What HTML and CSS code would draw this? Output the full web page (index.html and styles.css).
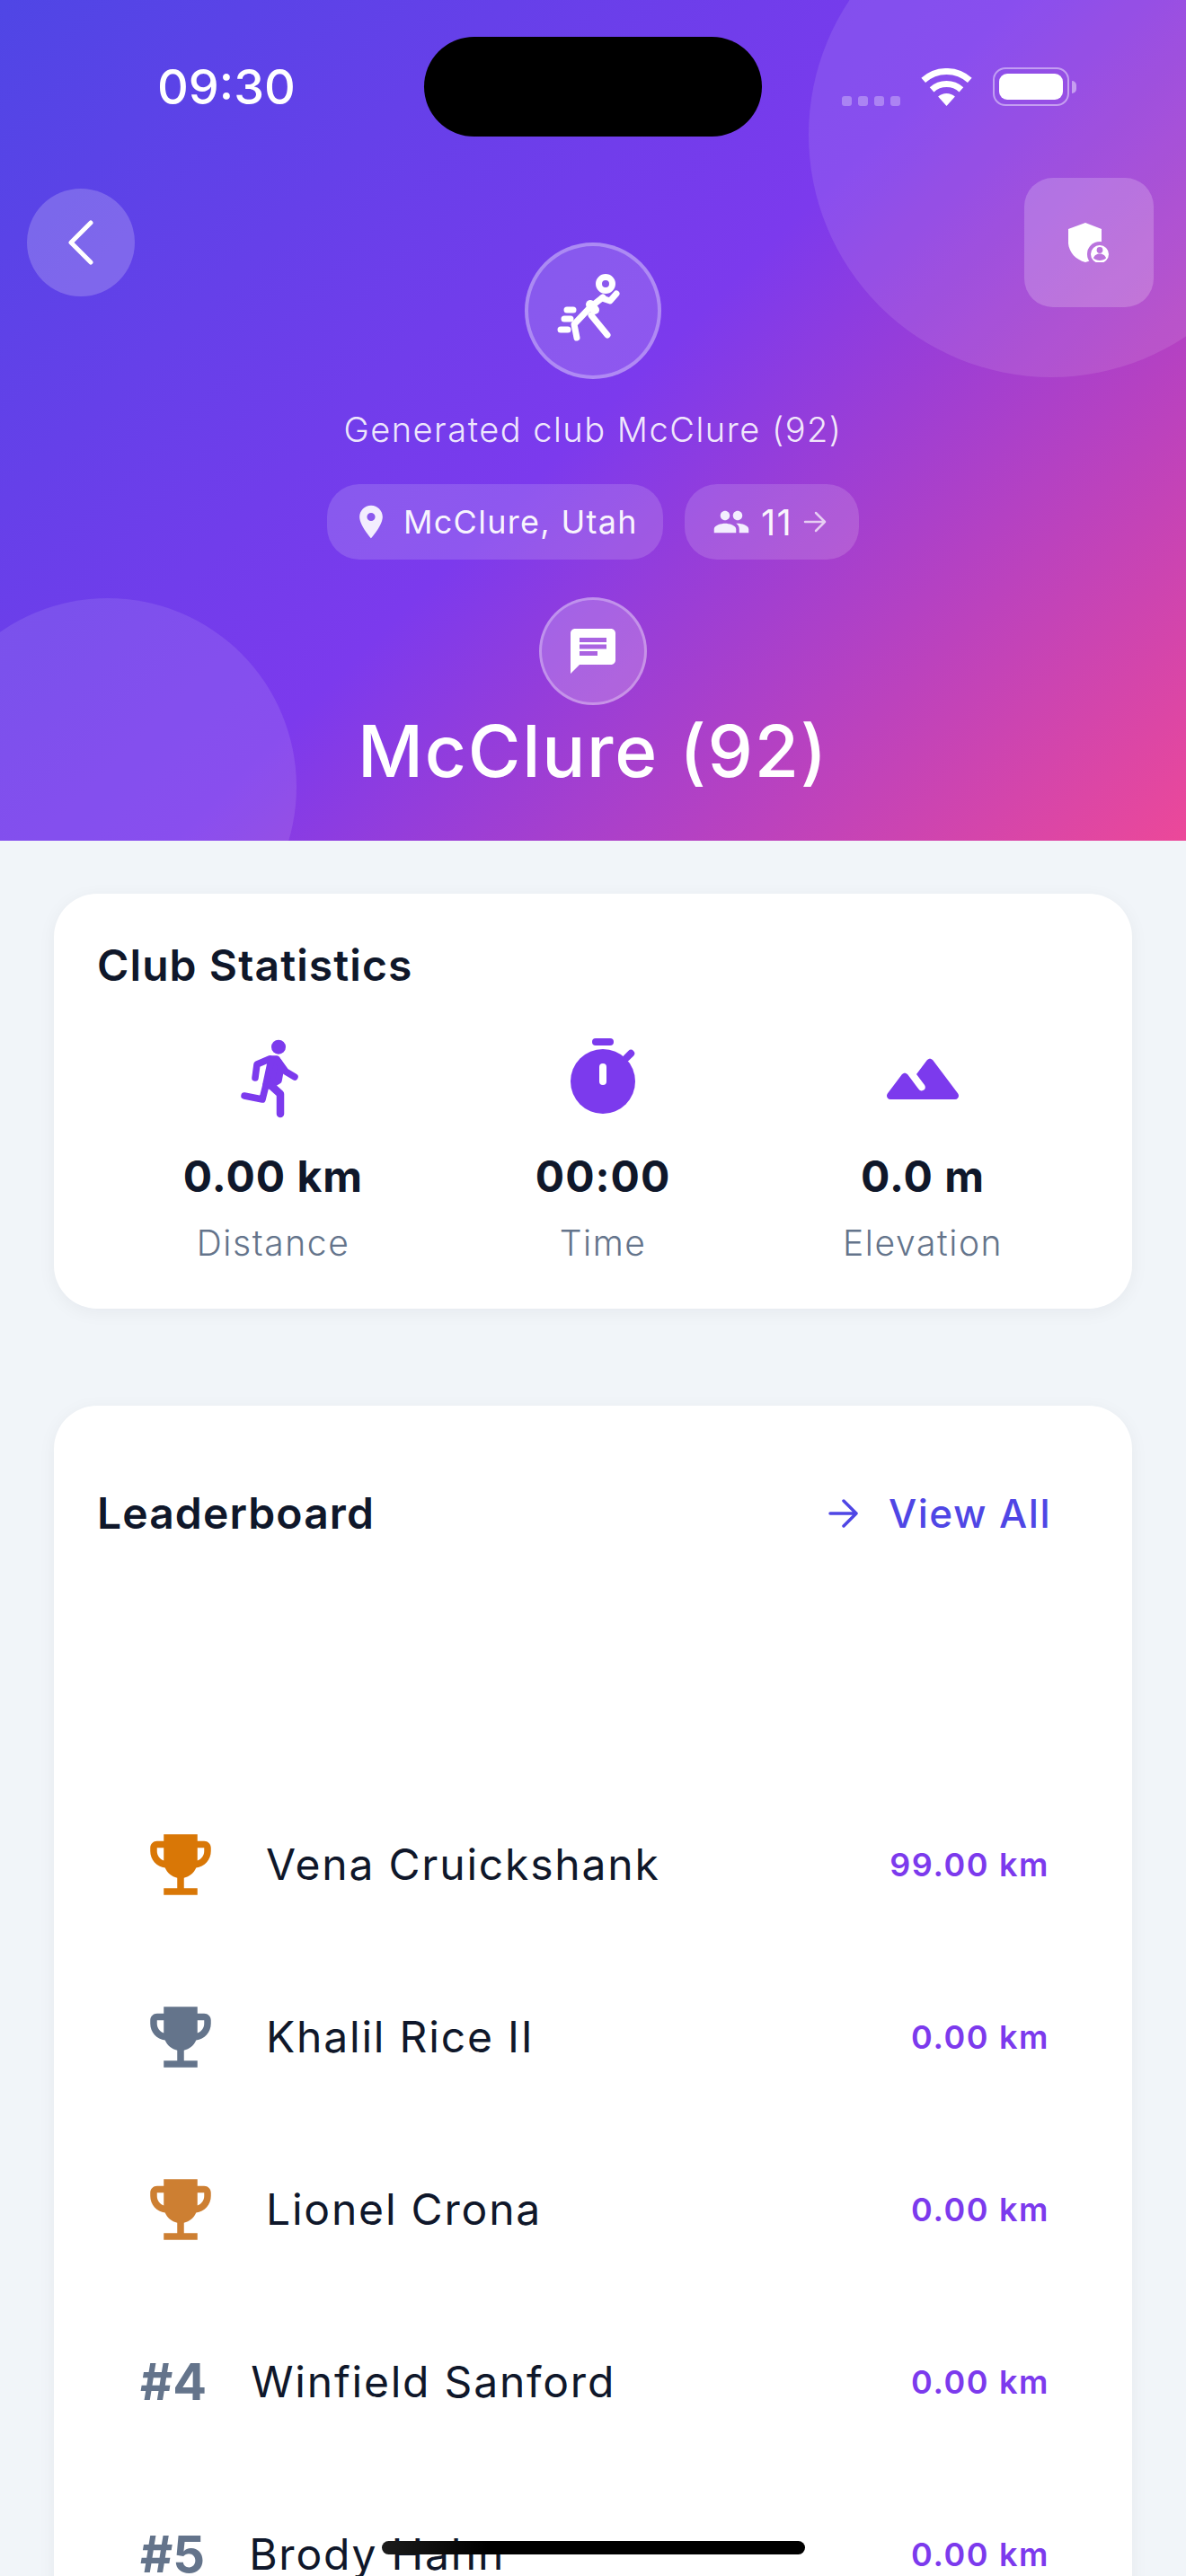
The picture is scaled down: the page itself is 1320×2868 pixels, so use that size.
FILE: index.html
```html
<!DOCTYPE html>
<html lang="en">
<head>
    <meta charset="utf-8">
    <title>McClure (92)</title>
    <link rel="stylesheet" href="styles.css">
</head>
<body>
    <svg class="defs" width="0" height="0">
        <symbol id="trophy" viewBox="0 0 24 24">
            <path d="M19 5h-2V3H7v2H5c-1.1 0-2 .9-2 2v1c0 2.55 1.92 4.63 4.39 4.94.63 1.5 1.98 2.63 3.61 2.96V19H7v2h10v-2h-4v-3.1c1.63-.33 2.98-1.46 3.61-2.96C19.08 12.63 21 10.55 21 8V7c0-1.1-.9-2-2-2zM5 8V7h2v3.82C5.84 10.4 5 9.3 5 8zm14 0c0 1.3-.84 2.4-2 2.82V7h2v1z"/>
        </symbol>
    </svg>

    <header class="hero">
        <div class="blob blob-top"></div>
        <div class="blob blob-bottom"></div>

        <div class="status-bar">
            <span class="time">09:30</span>
            <div class="island"></div>
            <div class="status-icons">
                <div class="signal"><i></i><i></i><i></i><i></i></div>
                <svg class="wifi" width="57" height="42" viewBox="0 0 57 42" fill="none" stroke="#fff" stroke-width="7">
                    <path d="M2.7 13.4A38.5 38.5 0 0 1 54.3 13.4"/>
                    <path d="M12.1 23.8A24.5 24.5 0 0 1 44.9 23.8"/>
                    <path d="M28.5 42L19.1 31.6A14 14 0 0 1 37.9 31.6Z" fill="#fff" stroke="none"/>
                </svg>
                <div class="battery"><div class="battery-fill"></div></div>
                <div class="battery-nub"></div>
            </div>
        </div>

        <div class="hero-top">
            <button class="back-btn">
                <svg width="32" height="52" viewBox="0 0 32 52" fill="none" stroke="#fff" stroke-width="5" stroke-linecap="round" stroke-linejoin="round">
                    <path d="M27 4L5 26l22 22"/>
                </svg>
            </button>
            <div class="club-icon">
                <svg width="120" height="120" viewBox="0 -3 120 120" fill="none" stroke="#fff" stroke-width="7" stroke-linecap="round" stroke-linejoin="round">
                    <circle cx="74" cy="27" r="7.5"/>
                    <path d="M71 42L57 53 39 72l3 15"/>
                    <path d="M70 43l9 3 7-8"/>
                    <path d="M58 62l18 22"/>
                    <path d="M57 50l5 6" stroke-width="10"/>
                    <path d="M31 56h7M28 66h7M24 78h8"/>
                </svg>
            </div>
            <button class="shield-btn">
                <svg width="46" height="44" viewBox="0 0 46 44">
                    <mask id="shieldCut">
                        <rect width="46" height="44" fill="#fff"/>
                        <circle cx="35" cy="35" r="14" fill="#000"/>
                    </mask>
                    <mask id="personCut">
                        <rect width="46" height="44" fill="#fff"/>
                        <circle cx="35" cy="30.5" r="3.4" fill="#000"/>
                        <path d="M28 39.5c1-3.6 4-5 7-5s6 1.4 7 5c-1.8 1.6-4.2 2.4-7 2.4s-5.2-.8-7-2.4z" fill="#000"/>
                    </mask>
                    <path d="M19 0l18 7v16c0 10-7 18-18 21C8 41 1 33 0 23V7z" fill="#fff" mask="url(#shieldCut)"/>
                    <circle cx="35" cy="35" r="10" fill="#fff" mask="url(#personCut)"/>
                </svg>
            </button>
        </div>

        <p class="club-desc">Generated club McClure (92)</p>

        <div class="chips">
            <div class="chip chip-location">
                <svg width="44" height="44" viewBox="0 0 24 24" fill="#f3eefe">
                    <path d="M12 2C8.13 2 5 5.13 5 9c0 5.25 7 13 7 13s7-7.75 7-13c0-3.87-3.13-7-7-7zm0 9.5a2.5 2.5 0 0 1 0-5 2.5 2.5 0 0 1 0 5z"/>
                </svg>
                <span>McClure, Utah</span>
            </div>
            <div class="chip chip-members">
                <svg width="42" height="42" viewBox="0 0 24 24" fill="#f3eefe">
                    <path d="M16 11c1.66 0 2.99-1.34 2.99-3S17.66 5 16 5c-1.66 0-3 1.34-3 3s1.34 3 3 3zm-8 0c1.66 0 2.99-1.34 2.99-3S9.66 5 8 5C6.34 5 5 6.34 5 8s1.34 3 3 3zm0 2c-2.33 0-7 1.17-7 3.5V19h14v-2.5c0-2.33-4.67-3.5-7-3.5zm8 0c-.29 0-.62.02-.97.05 1.16.84 1.97 1.97 1.97 3.45V19h6v-2.5c0-2.33-4.67-3.5-7-3.5z"/>
                </svg>
                <span>11</span>
                <svg class="chip-arrow" width="26" height="26" viewBox="0 0 26 26" fill="none" stroke="#fff" stroke-opacity=".7" stroke-width="2.5" stroke-linecap="round" stroke-linejoin="round">
                    <path d="M2 13h22M14 3l10 10-10 10"/>
                </svg>
            </div>
        </div>

        <div class="chat-icon">
            <svg width="60" height="60" viewBox="0 0 24 24" fill="#fff">
                <path fill-rule="evenodd" d="M20 2H4c-1.1 0-1.99.9-1.99 2L2 22l4-4h14c1.1 0 2-.9 2-2V4c0-1.1-.9-2-2-2zM6 9h12v2H6V9zm8 5H6v-2h8v2zm4-6H6V6h12v2z"/>
            </svg>
        </div>

        <h1 class="club-name">McClure (92)</h1>
    </header>

    <main class="content">
        <section class="card stats-card">
            <h2 class="card-title">Club Statistics</h2>
            <div class="stats-row">
                <div class="stat">
                    <svg width="96" height="96" viewBox="6 12 96 96" fill="none" stroke="#7c3aed" stroke-width="7.5" stroke-linecap="round" stroke-linejoin="round">
                        <circle cx="60" cy="25.7" r="8" fill="#7c3aed" stroke="none"/>
                        <path d="M50 39l-14 6-2 15"/>
                        <path d="M60 42l8 11 10 6"/>
                        <path d="M52 39h6l5 8-3 16-10 6-4-2z" fill="#7c3aed"/>
                        <path d="M46 68l-4 16-20-4"/>
                        <path d="M51 68l11 10v22" stroke-width="8.5"/>
                    </svg>
                    <div class="stat-value">0.00 km</div>
                    <div class="stat-label">Distance</div>
                </div>
                <div class="stat">
                    <svg width="96" height="96" viewBox="0 0 24 24">
                        <rect x="9" y="1" width="6" height="2" rx="1" fill="#7c3aed"/>
                        <circle cx="12" cy="13" r="9" fill="#7c3aed"/>
                        <path d="M18.5 6.5l1.3-1.3" stroke="#7c3aed" stroke-width="2" stroke-linecap="round"/>
                        <path d="M12 9v4" stroke="#fff" stroke-width="2" stroke-linecap="round"/>
                    </svg>
                    <div class="stat-value">00:00</div>
                    <div class="stat-label">Time</div>
                </div>
                <div class="stat">
                    <svg width="96" height="96" viewBox="0 0 24 24" fill="#7c3aed">
                        <path d="M13.2 7.07L10.25 11l2.25 3c.33.44.24 1.07-.2 1.4-.44.33-1.07.24-1.4-.2-1.05-1.4-2.31-3.07-3.1-4.14-.4-.53-1.2-.53-1.6 0l-4 5.33c-.49.67-.02 1.61.8 1.61h18c.82 0 1.29-.94.8-1.6l-7-9.33c-.4-.54-1.2-.54-1.6 0z"/>
                    </svg>
                    <div class="stat-value">0.0 m</div>
                    <div class="stat-label">Elevation</div>
                </div>
            </div>
        </section>

        <section class="card board-card">
            <div class="board-head">
                <h2 class="card-title">Leaderboard</h2>
                <a class="view-all">
                    <svg width="34" height="32" viewBox="0 0 34 32" fill="none" stroke="#4f46e5" stroke-width="3.5" stroke-linecap="round" stroke-linejoin="round">
                        <path d="M2 16h29M17 2l14 14-14 14"/>
                    </svg>
                    <span>View All</span>
                </a>
            </div>

            <ul class="board-list">
                <li class="board-row">
                    <svg class="trophy gold"><use href="#trophy"/></svg>
                    <span class="name">Vena Cruickshank</span>
                    <span class="dist">99.00 km</span>
                </li>
                <li class="board-row">
                    <svg class="trophy silver"><use href="#trophy"/></svg>
                    <span class="name">Khalil Rice II</span>
                    <span class="dist">0.00 km</span>
                </li>
                <li class="board-row">
                    <svg class="trophy bronze"><use href="#trophy"/></svg>
                    <span class="name">Lionel Crona</span>
                    <span class="dist">0.00 km</span>
                </li>
                <li class="board-row">
                    <span class="rank">#4</span>
                    <span class="name">Winfield Sanford</span>
                    <span class="dist">0.00 km</span>
                </li>
                <li class="board-row">
                    <span class="rank">#5</span>
                    <span class="name">Brody Hahn</span>
                    <span class="dist">0.00 km</span>
                </li>
            </ul>
        </section>
    </main>

    <div class="home-bar"></div>
</body>
</html>
```

FILE: styles.css
```css
* {
    box-sizing: border-box;
}
html, body {
    margin: 0;
    height: 2868px;
    overflow: hidden;
}
body {
    position: relative;
    font-family: 'Inter', 'Liberation Sans', sans-serif;
    background-color: #f1f5f9;
    color: #0f172a;
}
.defs {
    position: absolute;
}

/* header */
.hero {
    position: relative;
    height: 936px;
    overflow: hidden;
    display: flex;
    flex-direction: column;
    align-items: center;
    color: #fff;
    background: linear-gradient(135deg, #4f46e5 0%, #7c3aed 50%, #ec4899 100%);
}
.blob {
    position: absolute;
    border-radius: 50%;
    background: rgba(255, 255, 255, 0.1);
}
.blob-top {
    width: 540px;
    height: 540px;
    top: -120px;
    right: -120px;
}
.blob-bottom {
    width: 420px;
    height: 420px;
    top: 666px;
    left: -90px;
}
.status-bar {
    position: relative;
    width: 100%;
    height: 198px;
    padding-top: 41px;
    display: flex;
    justify-content: center;
}
.time {
    position: absolute;
    left: 175px;
    top: 65px;
    font-size: 54px;
    line-height: 64px;
    font-weight: 500;
}
.island {
    width: 376px;
    height: 111px;
    border-radius: 56px;
    background: #000;
}
.status-icons {
    position: absolute;
    left: 937px;
    top: 75px;
    display: flex;
    align-items: flex-end;
}
.signal {
    display: flex;
    gap: 7px;
    margin-right: 23px;
}
.signal i {
    width: 11px;
    height: 11px;
    border-radius: 3px;
    background: rgba(255, 255, 255, 0.3);
}
.wifi {
    display: block;
    margin-right: 23px;
}
.battery {
    width: 85px;
    height: 43px;
    padding: 5px;
    border: 2px solid rgba(255, 255, 255, 0.45);
    border-radius: 14px;
}
.battery-fill {
    height: 100%;
    border-radius: 9px;
    background: #fff;
}
.battery-nub {
    width: 5px;
    height: 14px;
    margin: 0 0 14px 3px;
    border-radius: 0 6px 6px 0;
    background: rgba(255, 255, 255, 0.45);
}
.hero-top {
    position: relative;
    width: 100%;
    padding: 0 36px;
    display: grid;
    grid-template-columns: 1fr auto 1fr;
    align-items: start;
}
button {
    border: 0;
    padding: 0;
    display: flex;
    align-items: center;
    justify-content: center;
}
.back-btn {
    width: 120px;
    height: 120px;
    margin: 12px 0 0 -6px;
    border-radius: 50%;
    background: rgba(255, 255, 255, 0.2);
}
.shield-btn {
    width: 144px;
    height: 144px;
    justify-self: end;
    border-radius: 32px;
    background: rgba(255, 255, 255, 0.2);
}
.club-icon {
    width: 152px;
    height: 152px;
    margin-top: 72px;
    border: 4px solid rgba(255, 255, 255, 0.3);
    border-radius: 50%;
    background: rgba(255, 255, 255, 0.15);
    display: flex;
    align-items: center;
    justify-content: center;
}
.club-desc {
    position: relative;
    margin: 34px 0 0;
    font-size: 38px;
    line-height: 44px;
    font-weight: 300;
    letter-spacing: 1.5px;
    color: rgba(255, 255, 255, 0.9);
}
.chips {
    position: relative;
    margin-top: 39px;
    display: flex;
    gap: 24px;
}
.chip {
    height: 84px;
    border-radius: 36px;
    background: rgba(255, 255, 255, 0.15);
    display: flex;
    align-items: center;
    font-size: 36px;
    letter-spacing: 1.3px;
    color: rgba(255, 255, 255, 0.95);
}
.chip-location {
    padding: 0 28px 0 27px;
    gap: 14px;
}
.chip-members {
    padding: 0 36px 0 31px;
    gap: 12px;
    font-size: 40px;
}
.chat-icon {
    position: relative;
    width: 120px;
    height: 120px;
    margin-top: 42px;
    border: 3px solid rgba(255, 255, 255, 0.3);
    border-radius: 50%;
    background: rgba(255, 255, 255, 0.2);
    display: flex;
    align-items: center;
    justify-content: center;
}
.club-name {
    position: relative;
    margin: 2px 0 0;
    font-size: 80px;
    line-height: 97px;
    font-weight: 500;
    letter-spacing: 1.8px;
}

/* cards */
.content {
    padding: 59px 60px 0;
}
.card {
    background: #fff;
    border-radius: 48px;
    box-shadow: 0 4px 20px rgba(15, 23, 42, 0.05);
}
.card-title {
    margin: 0;
    font-size: 48px;
    line-height: 58px;
    font-weight: 600;
    letter-spacing: 1.1px;
}
.stats-card {
    height: 462px;
    padding: 51px 48px 0;
}
.stats-row {
    margin-top: 48px;
    display: flex;
    justify-content: space-around;
}
.stat {
    display: flex;
    flex-direction: column;
    align-items: center;
}
.stat svg {
    display: block;
}
.stat-value {
    margin-top: 33px;
    font-size: 48px;
    line-height: 58px;
    font-weight: 700;
    letter-spacing: 1px;
}
.stat-label {
    margin-top: 22px;
    font-size: 39px;
    line-height: 46px;
    font-weight: 300;
    letter-spacing: 1.6px;
    color: #64748b;
}
.board-card {
    margin-top: 108px;
    padding: 91px 48px 48px;
}
.board-head {
    display: flex;
    justify-content: space-between;
    align-items: center;
}
.view-all {
    margin-right: 42px;
    display: flex;
    align-items: center;
    gap: 33px;
    font-size: 44px;
    font-weight: 500;
    letter-spacing: 1.5px;
    color: #4f46e5;
}
.board-list {
    list-style: none;
    margin: 266px 0 0;
    padding: 0;
}
.board-row {
    height: 192px;
    padding: 0 44px 0 48px;
    display: flex;
    align-items: center;
}
.trophy {
    width: 90px;
    height: 90px;
    margin-right: 50px;
    flex-shrink: 0;
}
.gold {
    fill: #d97706;
}
.silver {
    fill: #64748b;
}
.bronze {
    fill: #cd7f32;
}
.rank {
    margin-right: 49px;
    font-size: 56px;
    line-height: 48px;
    font-weight: 700;
    color: #64748b;
}
.name {
    flex: 1;
    font-size: 48px;
    line-height: 48px;
    letter-spacing: 1.8px;
}
.dist {
    font-size: 36px;
    font-weight: 600;
    letter-spacing: 1.6px;
    color: #7c3aed;
}
.home-bar {
    position: absolute;
    left: 425px;
    top: 2829px;
    width: 471px;
    height: 15px;
    border-radius: 8px;
    background: linear-gradient(90deg, #1c1c1c, #000 25%);
}
```
